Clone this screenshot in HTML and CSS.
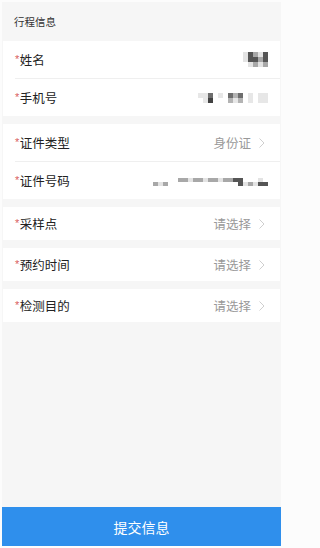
FILE: index.html
```html
<!DOCTYPE html>
<html lang="zh">
<head>
<meta charset="utf-8">
<title>行程信息</title>
<link rel="stylesheet" href="styles.css">
</head>
<body>
<div class="page">
  <div class="head">行程信息</div>

  <div class="card">
    <div class="row tall">
      <span class="label"><i class="req">*</i>姓名</span>
      <span class="mosaic m-name">
        <b class="l"></b><b class="d"></b><b class="m"></b><b class="l"></b><b class="d"></b>
        <b class="l"></b><b class="d"></b><b class="d"></b><b class="m"></b><b class="d"></b>
        <b class="n"></b><b class="l"></b><b class="m"></b><b class="l"></b><b class="m"></b>
      </span>
    </div>
    <div class="row tall">
      <span class="label"><i class="req">*</i>手机号</span>
      <span class="mosaic m-phone">
        <b class="n"></b><b class="l"></b><b class="l"></b><b class="d"></b><b class="n"></b><b class="l"></b><b class="n"></b><b class="d"></b><b class="m"></b><b class="d"></b><b class="n"></b><b class="l"></b><b class="n"></b><b class="l"></b><b class="l"></b>
        <b class="n"></b><b class="n"></b><b class="l"></b><b class="k"></b><b class="n"></b><b class="n"></b><b class="n"></b><b class="m"></b><b class="l"></b><b class="m"></b><b class="n"></b><b class="l"></b><b class="n"></b><b class="l"></b><b class="l"></b>
      </span>
    </div>
  </div>

  <div class="card">
    <div class="row tall">
      <span class="label"><i class="req">*</i>证件类型</span>
      <span class="value">身份证<svg class="chev" viewBox="0 0 6 10" width="6" height="10"><path d="M0.5 0.5 L5 5 L0.5 9.5" fill="none" stroke="#cfcfcf" stroke-width="1"/></svg></span>
    </div>
    <div class="row tall">
      <span class="label"><i class="req">*</i>证件号码</span>
      <span class="mosaic m-id">
        <b class="n"></b><b class="n"></b><b class="n"></b><b class="n"></b><b class="n"></b><b class="m"></b><b class="m"></b><b class="l"></b><b class="m"></b><b class="m"></b><b class="l"></b><b class="m"></b><b class="m"></b><b class="l"></b><b class="m"></b><b class="m"></b><b class="d"></b><b class="d"></b><b class="n"></b><b class="n"></b><b class="n"></b><b class="l"></b><b class="n"></b>
        <b class="m"></b><b class="l"></b><b class="m"></b><b class="n"></b><b class="n"></b><b class="n"></b><b class="n"></b><b class="n"></b><b class="n"></b><b class="n"></b><b class="n"></b><b class="n"></b><b class="n"></b><b class="n"></b><b class="n"></b><b class="n"></b><b class="n"></b><b class="d"></b><b class="l"></b><b class="m"></b><b class="l"></b><b class="d"></b><b class="d"></b>
      </span>
    </div>
  </div>

  <div class="card">
    <div class="row">
      <span class="label"><i class="req">*</i>采样点</span>
      <span class="value">请选择<svg class="chev" viewBox="0 0 6 10" width="6" height="10"><path d="M0.5 0.5 L5 5 L0.5 9.5" fill="none" stroke="#cfcfcf" stroke-width="1"/></svg></span>
    </div>
  </div>

  <div class="card">
    <div class="row">
      <span class="label"><i class="req">*</i>预约时间</span>
      <span class="value">请选择<svg class="chev" viewBox="0 0 6 10" width="6" height="10"><path d="M0.5 0.5 L5 5 L0.5 9.5" fill="none" stroke="#cfcfcf" stroke-width="1"/></svg></span>
    </div>
  </div>

  <div class="card">
    <div class="row">
      <span class="label"><i class="req">*</i>检测目的</span>
      <span class="value">请选择<svg class="chev" viewBox="0 0 6 10" width="6" height="10"><path d="M0.5 0.5 L5 5 L0.5 9.5" fill="none" stroke="#cfcfcf" stroke-width="1"/></svg></span>
    </div>
  </div>

  <div class="spacer"></div>
  <button class="submit" type="button">提交信息</button>
</div>
</body>
</html>
```

FILE: styles.css
```css
* { box-sizing: border-box; }

html, body {
  margin: 0;
  padding: 0;
  background: #fcfcfc;
}

body {
  font-family: "Noto Sans CJK SC", "Noto Sans", sans-serif;
  color: #333;
}

.page {
  width: 279px;
  height: 544px;
  margin: 2px 7px 2px 2px;
  background: #f6f6f6;
  display: flex;
  flex-direction: column;
}

.head {
  height: 39px;
  flex: none;
  display: flex;
  align-items: center;
  padding-left: 12px;
  font-size: 10.5px;
  color: #333;
}

.card {
  flex: none;
  margin: 0 1px 8px 1px;
  background: #fff;
  padding-left: 12px;
}

.row {
  height: 33px;
  display: flex;
  align-items: center;
  justify-content: space-between;
  padding-right: 12px;
}

.row.tall { height: 37px; }

.row + .row {
  height: 38px;
  border-top: 1px solid #efefef;
}

.label {
  font-size: 12.5px;
  color: #222;
  display: flex;
  align-items: center;
}

.req {
  font-style: normal;
  font-family: "Liberation Sans", sans-serif;
  color: #d9605e;
  font-size: 11px;
  margin-right: 0.5px;
  position: relative;
  top: -1px;
}

.value {
  font-size: 12.5px;
  color: #999;
  display: flex;
  align-items: center;
}

.chev {
  margin-left: 8px;
  margin-right: 3px;
  display: block;
}

.mosaic {
  display: grid;
}

.mosaic b {
  display: block;
}

.mosaic .n { background: #fff; }
.mosaic .l { background: #e3e3e3; }
.mosaic .m { background: #a8a8a8; }
.mosaic .d { background: #555; }
.mosaic .k { background: #222; }

.m-name {
  grid-template-columns: repeat(5, 5px);
  grid-auto-rows: 5px;
}

.m-phone {
  grid-template-columns: repeat(15, 5px);
  grid-auto-rows: 5px;
  opacity: 0.85;
}

.m-id {
  grid-template-columns: repeat(23, 5px);
  grid-auto-rows: 4px;
  margin-top: 2px;
}

.spacer { flex: 1; }

.submit {
  flex: none;
  height: 39px;
  border: 0;
  margin: 0;
  padding: 0;
  background: #2f8fec;
  color: #fff;
  font-family: "Noto Sans CJK SC", "Noto Sans", sans-serif;
  font-size: 14px;
  width: 100%;
}
```
